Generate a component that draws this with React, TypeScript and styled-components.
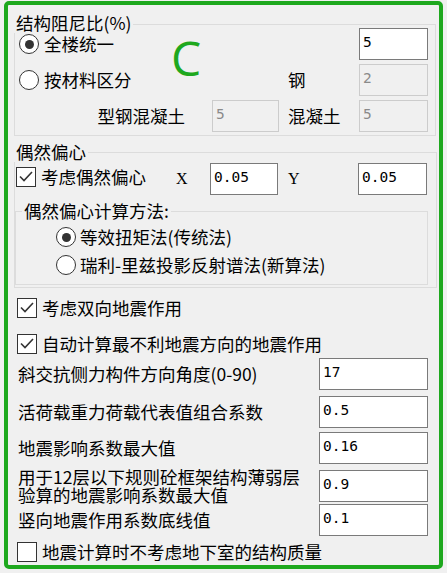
import React from "react";
import styled, { createGlobalStyle } from "styled-components";

const FONT = `"Noto Sans CJK SC", "Noto Sans", sans-serif`;
const MONO = `"DejaVu Sans Mono", "Liberation Mono", monospace`;

const Global = createGlobalStyle`
  html, body { margin: 0; padding: 0; background: #f0f0f0; }
  body { font-family: ${FONT}; color: #000; }
  * { box-sizing: border-box; }
`;

const Frame = styled.div`
  position: relative;
  width: 439px;
  height: 568px;
  margin: 1px 0 0 4px;
  border: 4px solid #1ea81e;
  border-radius: 5px;
  padding-left: 6px;
  display: flex;
  flex-direction: column;
  font-size: 17.5px;
  line-height: 20px;
`;

const Mark = styled.div`
  position: absolute;
  left: 163px;
  top: 29px;
  font-family: "Open Sans", "Liberation Sans", sans-serif;
  font-size: 48px;
  line-height: 1;
  color: #1ea81e;
`;

const GroupBox = styled.div<{ $w: number; $h: number; $mt: number; $ml?: number }>`
  position: relative;
  width: ${(p) => p.$w}px;
  height: ${(p) => p.$h}px;
  margin-top: ${(p) => p.$mt}px;
  margin-left: ${(p) => p.$ml ?? 0}px;
  border: 1px solid #dcdcdc;
  flex-shrink: 0;
`;

const GroupTitle = styled.div<{ $top: number; $left: number }>`
  position: absolute;
  top: ${(p) => p.$top}px;
  left: ${(p) => p.$left}px;
  padding: 0 2px;
  background: #f0f0f0;
  white-space: nowrap;
`;

const DampGrid = styled.div`
  display: grid;
  grid-template-columns: 193px 67px 80px 69px;
  grid-template-rows: repeat(3, 32px);
  row-gap: 4px;
  padding: 3px 0 0 4px;
`;

const Cell = styled.div<{ $col: string; $justify?: string; $pl?: number; $pr?: number }>`
  grid-column: ${(p) => p.$col};
  display: flex;
  align-items: center;
  justify-content: ${(p) => p.$justify ?? "flex-start"};
  padding-left: ${(p) => p.$pl ?? 0}px;
  padding-right: ${(p) => p.$pr ?? 0}px;
  white-space: nowrap;
`;

const Choice = styled.div<{ $gap?: number; $lift?: number }>`
  display: flex;
  align-items: center;
  gap: ${(p) => p.$gap ?? 5}px;
  white-space: nowrap;
  margin-top: ${(p) => -(p.$lift ?? 0)}px;
`;

const RadioCircle = styled.span<{ $on?: boolean }>`
  width: 20px;
  height: 20px;
  border-radius: 50%;
  border: 1px solid #333;
  background: #fff;
  display: inline-flex;
  align-items: center;
  justify-content: center;
  flex-shrink: 0;
  &::after {
    content: "";
    width: 9px;
    height: 9px;
    border-radius: 50%;
    background: ${(p) => (p.$on ? "#333" : "transparent")};
  }
`;

const CheckBox = styled.span`
  width: 20px;
  height: 20px;
  border: 1px solid #333;
  background: #fff;
  display: inline-flex;
  flex-shrink: 0;
  svg { display: block; }
`;

const Edit = styled.div<{ $w: number; $disabled?: boolean }>`
  width: ${(p) => p.$w}px;
  height: 32px;
  border: 1px solid ${(p) => (p.$disabled ? "#cccccc" : "#7a7a7a")};
  background: ${(p) => (p.$disabled ? "#f0f0f0" : "#ffffff")};
  color: ${(p) => (p.$disabled ? "#8a8a8a" : "#000")};
  font-family: ${MONO};
  font-size: 14.5px;
  line-height: 20px;
  padding: 3px 3px 0;
  align-self: center;
`;

const Latin = styled.span`
  font-family: "Liberation Serif", serif;
  font-size: 16px;
`;

const OffsetGrid = styled.div`
  display: grid;
  grid-template-columns: 160px 34px 68px 80px 69px;
  height: 32px;
  margin: 10px 0 0 1px;
`;

const MethodList = styled.div`
  display: flex;
  flex-direction: column;
  padding: 11px 0 0 40px;
`;

const MethodRow = styled.div`
  height: 28px;
  display: flex;
  align-items: center;
`;

const Lower = styled.div`
  display: flex;
  flex-direction: column;
  margin-left: 3px;
  width: 411px;
`;

const CheckRow = styled.div<{ $mt: number; $h: number }>`
  height: ${(p) => p.$h}px;
  margin-top: ${(p) => p.$mt}px;
  display: flex;
  align-items: center;
`;

const FieldRow = styled.div<{ $mt: number }>`
  height: 32px;
  margin-top: ${(p) => p.$mt}px;
  display: grid;
  grid-template-columns: 1fr 109px;
  align-items: center;
  padding-left: 1px;
`;

const FieldText = styled.div<{ $lh?: number }>`
  line-height: ${(p) => p.$lh ?? 20}px;
  white-space: nowrap;
`;

const Radio = ({ on, label, gap }: { on?: boolean; label: string; gap?: number }) => (
  <Choice $gap={gap}>
    <RadioCircle $on={on} />
    <span>{label}</span>
  </Choice>
);

const Check = ({ on, label, lift }: { on?: boolean; label: string; lift?: number }) => (
  <Choice $lift={lift}>
    <CheckBox>
      {on && (
        <svg width="18" height="18" viewBox="0 0 18 18">
          <polyline points="3,8.5 7,12.5 15,4" fill="none" stroke="#333" strokeWidth="1.6" />
        </svg>
      )}
    </CheckBox>
    <span>{label}</span>
  </Choice>
);

export default function App() {
  return (
    <>
      <Global />
      <Frame>
        <GroupBox $w={422} $h={112} $mt={19}>
          <GroupTitle $top={-12} $left={-1}>结构阻尼比(%)</GroupTitle>
          <DampGrid>
            <Cell $col="1 / 4">
              <Radio on label="全楼统一" />
            </Cell>
            <Cell $col="4">
              <Edit $w={69}>5</Edit>
            </Cell>
            <Cell $col="1 / 3">
              <Radio label="按材料区分" />
            </Cell>
            <Cell $col="3" $pl={9}>钢</Cell>
            <Cell $col="4">
              <Edit $w={69} $disabled>2</Edit>
            </Cell>
            <Cell $col="1" $justify="flex-end" $pr={27}>型钢混凝土</Cell>
            <Cell $col="2">
              <Edit $w={67} $disabled>5</Edit>
            </Cell>
            <Cell $col="3" $pl={9}>混凝土</Cell>
            <Cell $col="4">
              <Edit $w={69} $disabled>5</Edit>
            </Cell>
          </DampGrid>
        </GroupBox>

        <GroupBox $w={423} $h={136} $mt={16}>
          <GroupTitle $top={-11} $left={-1}>偶然偏心</GroupTitle>
          <OffsetGrid>
            <Cell $col="1">
              <Check on label="考虑偶然偏心" lift={4} />
            </Cell>
            <Cell $col="2">
              <Latin>X</Latin>
            </Cell>
            <Cell $col="3">
              <Edit $w={68}>0.05</Edit>
            </Cell>
            <Cell $col="4" $pl={10}>
              <Latin>Y</Latin>
            </Cell>
            <Cell $col="5">
              <Edit $w={69}>0.05</Edit>
            </Cell>
          </OffsetGrid>
          <GroupBox $w={413} $h={74} $mt={16} $ml={0}>
            <GroupTitle $top={-11} $left={6}>偶然偏心计算方法:</GroupTitle>
            <MethodList>
              <MethodRow>
                <Radio on label="等效扭矩法(传统法)" gap={4} />
              </MethodRow>
              <MethodRow>
                <Radio label="瑞利-里兹投影反射谱法(新算法)" gap={4} />
              </MethodRow>
            </MethodList>
          </GroupBox>
        </GroupBox>

        <Lower>
          <CheckRow $mt={6} $h={28}>
            <Check on label="考虑双向地震作用" />
          </CheckRow>
          <CheckRow $mt={8} $h={28}>
            <Check on label="自动计算最不利地震方向的地震作用" />
          </CheckRow>
          <FieldRow $mt={0}>
            <FieldText>斜交抗侧力构件方向角度(0-90)</FieldText>
            <Edit $w={109}>17</Edit>
          </FieldRow>
          <FieldRow $mt={6}>
            <FieldText>活荷载重力荷载代表值组合系数</FieldText>
            <Edit $w={109}>0.5</Edit>
          </FieldRow>
          <FieldRow $mt={4}>
            <FieldText>地震影响系数最大值</FieldText>
            <Edit $w={109}>0.16</Edit>
          </FieldRow>
          <FieldRow $mt={4}>
            <FieldText $lh={18}>
              用于12层以下规则砼框架结构薄弱层
              <br />
              验算的地震影响系数最大值
            </FieldText>
            <Edit $w={109}>0.9</Edit>
          </FieldRow>
          <FieldRow $mt={4}>
            <FieldText>竖向地震作用系数底线值</FieldText>
            <Edit $w={109}>0.1</Edit>
          </FieldRow>
          <CheckRow $mt={3} $h={26}>
            <Check label="地震计算时不考虑地下室的结构质量" />
          </CheckRow>
        </Lower>

        <Mark>C</Mark>
      </Frame>
    </>
  );
}
